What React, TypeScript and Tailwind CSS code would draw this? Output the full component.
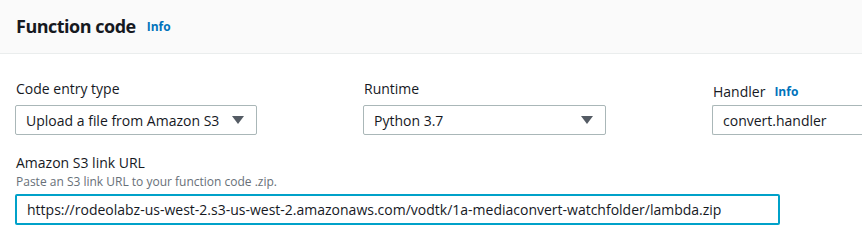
import React from "react";

const font = { fontFamily: '"Open Sans", "Noto Sans", Arial, sans-serif' };

function Caret() {
  return (
    <svg width="12" height="8" viewBox="0 0 12 8" className="shrink-0">
      <polygon points="0,0 12,0 6,8" fill="#545b64" />
    </svg>
  );
}

function Select({ value, width }: { value: string; width: string }) {
  return (
    <div className={`${width} h-[30px] border border-[#aab7b8] rounded-[2px] bg-white flex items-center justify-between pl-[10px] pr-[12px] text-[14px] text-[#16191f]`}>
      <span>{value}</span>
      <Caret />
    </div>
  );
}

export default function App() {
  return (
    <div className="w-[862px] h-[244px] bg-white overflow-hidden text-[#16191f]" style={font}>
      <div className="h-[54px] bg-[#fafafa] border-b border-[#eaeded] flex items-center pl-[16px] gap-[11px]">
        <h2 className="text-[18px] font-bold leading-none tracking-[-0.5px] mb-[2px]">Function code</h2>
        <span className="text-[12px] font-bold text-[#0073bb] mt-[1px]">Info</span>
      </div>
      <div className="pl-[15px] pt-[25px]">
        <div className="flex">
          <div className="w-[348px]">
            <div className="text-[14px] h-[26px] leading-[20px] pl-[1px]">Code entry type</div>
            <Select value="Upload a file from Amazon S3" width="w-[242px]" />
          </div>
          <div className="w-[349px]">
            <div className="text-[14px] h-[26px] leading-[20px] pl-[1px]">Runtime</div>
            <Select value="Python 3.7" width="w-[243px]" />
          </div>
          <div className="flex-1">
            <div className="text-[14px] h-[26px] leading-[20px] pl-[1px] flex items-center gap-[9px]">
              <span>Handler</span>
              <span className="text-[12px] font-bold text-[#0073bb]">Info</span>
            </div>
            <div className="h-[30px] border border-[#aab7b8] border-r-0 rounded-l-[2px] bg-white flex items-center pl-[10px] text-[14px]">
              convert.handler
            </div>
          </div>
        </div>
        <div className="mt-[18px]">
          <div className="text-[14px] leading-[20px] pl-[1px]">Amazon S3 link URL</div>
          <div className="text-[12px] leading-[16px] text-[#687078] pl-[1px] mt-[1px]">Paste an S3 link URL to your function code .zip.</div>
          <div className="mt-[4px] w-[765px] h-[31px] border-2 border-[#00a1c9] rounded-[2px] bg-white flex items-center pl-[10px] text-[14px]">
            https://rodeolabz-us-west-2.s3-us-west-2.amazonaws.com/vodtk/1a-mediaconvert-watchfolder/lambda.zip
          </div>
        </div>
      </div>
    </div>
  );
}
